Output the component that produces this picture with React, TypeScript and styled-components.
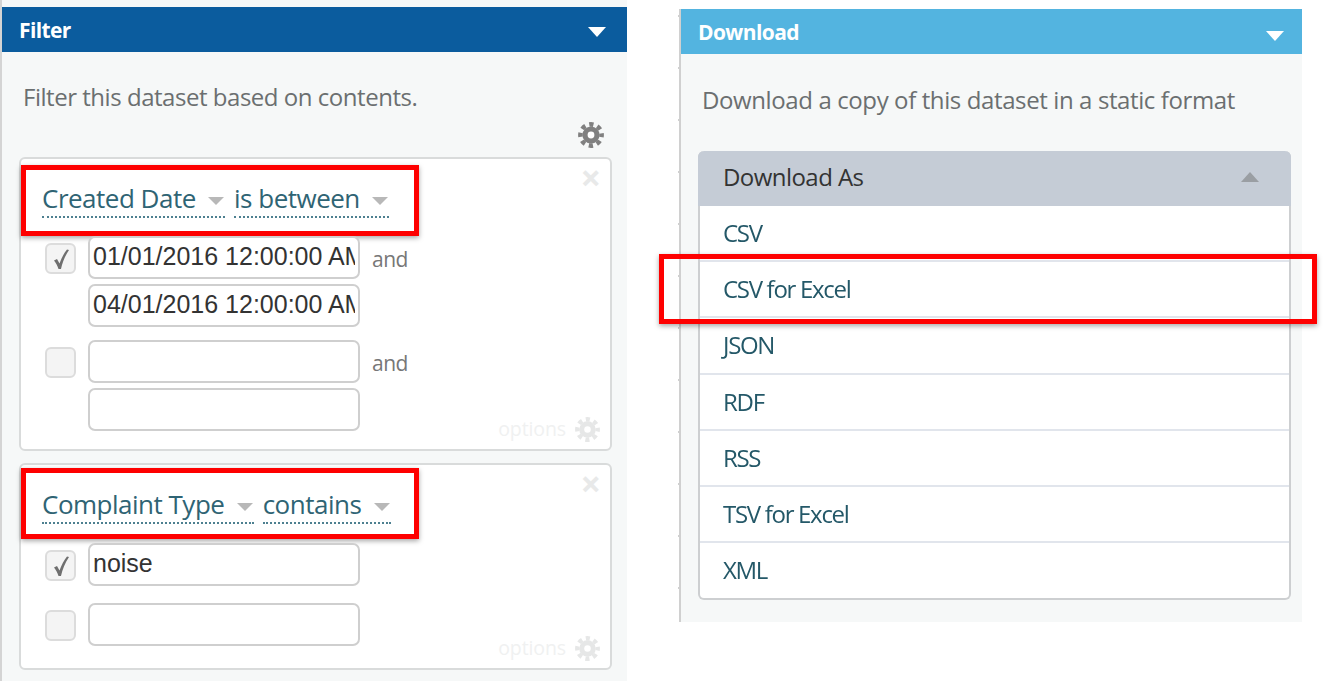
import React from "react";
import styled, { createGlobalStyle } from "styled-components";

const formats = ["CSV", "CSV for Excel", "JSON", "RDF", "RSS", "TSV for Excel", "XML"];

const Gear: React.FC = () => (
  <svg viewBox="0 0 26 26" width="1em" height="1em">
    <circle cx="13" cy="13" r="8.6" fill="currentColor" />
    <circle cx="13" cy="13" r="10.6" fill="none" stroke="currentColor" strokeWidth="4.6" strokeDasharray="4.3 4.03" strokeDashoffset="2.15" />
    <circle cx="13" cy="13" r="3.4" fill="#fff" />
  </svg>
);

const CheckMark: React.FC = () => (
  <svg width="20" height="22" viewBox="0 0 20 22">
    <path d="M3 12.5 L6 11 L8.5 15.5 C10.5 10 13 5 16 1.5 L18 2 C14 8 11.5 14 10 21 L7.5 21 C6.5 18 5 15 3 12.5 Z" fill="#6f6f6f" />
  </svg>
);

const App: React.FC = () => {
  return (
    <Page>
      <GlobalStyle />
      <FilterPanel>
        <PanelHeader color="#0b5c9e">
          <span>Filter</span>
          <HeaderCaret />
        </PanelHeader>
        <FilterBody>
          <Intro>Filter this dataset based on contents.</Intro>
          <TopGear>
            <Gear />
          </TopGear>
          <ConditionCard height={294}>
            <CloseMark>×</CloseMark>
            <Highlight top={6} inset={10}>
              <Picker>
                Created Date <PickerCaret />
              </Picker>
              <Picker>
                is between <PickerCaret />
              </Picker>
            </Highlight>
            <ConditionRow gap={13} offset={0}>
              <CheckBox>
                <CheckMark />
              </CheckBox>
              <InputStack>
                <TextInput readOnly value="01/01/2016 12:00:00 AM" />
                <TextInput readOnly value="04/01/2016 12:00:00 AM" />
              </InputStack>
              <AndLabel>and</AndLabel>
            </ConditionRow>
            <ConditionRow gap={13} offset={0}>
              <CheckBox />
              <InputStack>
                <TextInput readOnly value="" />
                <TextInput readOnly value="" />
              </InputStack>
              <AndLabel>and</AndLabel>
            </ConditionRow>
            <Options>
              options <Gear />
            </Options>
          </ConditionCard>
          <ConditionCard height={207}>
            <CloseMark>×</CloseMark>
            <Highlight top={3} inset={13}>
              <Picker>
                Complaint Type <PickerCaret />
              </Picker>
              <Picker>
                contains <PickerCaret />
              </Picker>
            </Highlight>
            <ConditionRow gap={17} offset={4}>
              <CheckBox>
                <CheckMark />
              </CheckBox>
              <InputStack>
                <TextInput readOnly value="noise" />
              </InputStack>
            </ConditionRow>
            <ConditionRow gap={17} offset={0}>
              <CheckBox />
              <InputStack>
                <TextInput readOnly value="" />
              </InputStack>
            </ConditionRow>
            <Options>
              options <Gear />
            </Options>
          </ConditionCard>
        </FilterBody>
      </FilterPanel>
      <DownloadColumn>
        <Ruler />
        <DownloadPanel>
          <DownloadHeader color="#53b4e0">
            <span>Download</span>
            <HeaderCaret />
          </DownloadHeader>
          <DownloadBody>
            <DownloadIntro>Download a copy of this dataset in a static format</DownloadIntro>
            <FormatList>
              <FormatHeader>
                Download As
                <FormatCaret />
              </FormatHeader>
              {formats.map((format) => (
                <FormatRow key={format}>
                  {format}
                  {format === "CSV for Excel" && <RowHighlight />}
                </FormatRow>
              ))}
            </FormatList>
          </DownloadBody>
        </DownloadPanel>
      </DownloadColumn>
    </Page>
  );
};

const GlobalStyle = createGlobalStyle`
  html, body {
    margin: 0;
    padding: 0;
    background: #fff;
  }
`;

const Page = styled.div`
  display: flex;
  align-items: flex-start;
  width: 1325px;
  height: 681px;
  overflow: hidden;
  font-family: "Open Sans", "Liberation Sans", sans-serif;
  filter: blur(0.4px);
`;

const FilterPanel = styled.div`
  box-sizing: border-box;
  width: 627px;
  height: 681px;
  padding-top: 7px;
  background: #f6f8f8;
  border-left: 2px solid #d4d4d4;
`;

const PanelHeader = styled.div<{ color: string }>`
  display: flex;
  align-items: center;
  justify-content: space-between;
  box-sizing: border-box;
  height: 45px;
  padding: 0 21px 0 17px;
  background: ${(p) => p.color};
  color: #fff;
  font-size: 21px;
  font-weight: 700;
  letter-spacing: -0.6px;
`;

const DownloadHeader = styled(PanelHeader)`
  padding-right: 18px;

  i {
    margin-top: 8px;
  }
`;

const HeaderCaret = styled.i`
  margin-top: 4px;
  border-top: 10px solid #fff;
  border-left: 9px solid transparent;
  border-right: 9px solid transparent;
`;

const FilterBody = styled.div`
  padding: 29px 15px 0 17px;
`;

const Intro = styled.div`
  height: 32px;
  padding-left: 4px;
  color: #6b6f70;
  font-size: 24px;
  line-height: 32px;
  letter-spacing: -0.47px;
  white-space: nowrap;
`;

const DownloadIntro = styled(Intro)`
  letter-spacing: -0.39px;
`;

const TopGear = styled.div`
  display: flex;
  justify-content: flex-end;
  box-sizing: border-box;
  height: 44px;
  padding: 9px 8px 0 0;
  color: #808080;
  font-size: 26px;
`;

const ConditionCard = styled.div<{ height: number }>`
  position: relative;
  box-sizing: border-box;
  height: ${(p) => p.height}px;
  margin-bottom: 12px;
  background: #fff;
  border: 2px solid #d9dbdb;
  border-radius: 6px;
`;

const CloseMark = styled.span`
  position: absolute;
  top: 1px;
  right: 9px;
  color: #e8e9e9;
  font-size: 36px;
  font-weight: 700;
  line-height: 36px;
`;

const Highlight = styled.div<{ top: number; inset: number }>`
  box-sizing: border-box;
  display: flex;
  gap: 9px;
  width: 398px;
  height: 71px;
  margin: ${(p) => p.top}px 0 0 0;
  padding: ${(p) => p.inset}px 0 0 16px;
  border: 5px solid #fe0000;
  box-shadow: 0 2px 5px rgba(0, 0, 0, 0.35);
`;

const Picker = styled.div`
  height: 36px;
  color: #2f6474;
  font-size: 26px;
  line-height: 36px;
  letter-spacing: -0.5px;
  white-space: nowrap;
  border-bottom: 2px dotted #4d8090;
`;

const PickerCaret = styled.i`
  display: inline-block;
  margin: 0 1px 3px 6px;
  border-top: 8px solid #b8b8b8;
  border-left: 8px solid transparent;
  border-right: 8px solid transparent;
`;

const ConditionRow = styled.div<{ gap: number; offset: number }>`
  display: flex;
  align-items: flex-start;
  margin-top: ${(p) => p.offset}px;
  margin-bottom: ${(p) => p.gap}px;
  padding-left: 24px;
`;

const CheckBox = styled.div`
  box-sizing: border-box;
  display: flex;
  align-items: center;
  justify-content: center;
  width: 31px;
  height: 31px;
  margin: 7px 12px 0 0;
  background: #f4f4f4;
  border: 2px solid #dcdcdc;
  border-radius: 6px;
`;

const InputStack = styled.div`
  display: flex;
  flex-direction: column;
  gap: 5px;
`;

const TextInput = styled.input`
  box-sizing: border-box;
  display: block;
  width: 272px;
  height: 43px;
  padding: 0 3px 3px;
  color: #333;
  background: #fff;
  border: 2px solid #cfcfcf;
  border-radius: 7px;
  font-family: "Liberation Sans", Arial, sans-serif;
  font-size: 25px;
  outline: none;
`;

const AndLabel = styled.span`
  margin: 6px 0 0 12px;
  color: #777;
  font-size: 21px;
  line-height: 34px;
  letter-spacing: -0.5px;
`;

const Options = styled.div`
  position: absolute;
  right: 10px;
  bottom: 7px;
  display: flex;
  align-items: center;
  gap: 9px;
  color: #f0f1f1;
  font-size: 19.5px;
  line-height: 26px;
  letter-spacing: -0.1px;

  svg {
    width: 25px;
    height: 25px;
    color: #e6e7e7;
  }
`;

const DownloadColumn = styled.div`
  display: flex;
  margin: 9px 0 0 51px;
  height: 613px;
`;

const Ruler = styled.div`
  width: 3px;
  height: 100%;
  background:
    linear-gradient(#d0d0d0, #d0d0d0) right top / 2px 100% no-repeat,
    repeating-linear-gradient(transparent 0 6px, #d0d0d0 6px 8px, transparent 8px 52px);
`;

const DownloadPanel = styled.div`
  width: 621px;
  background: #f6f8f8;
`;

const DownloadBody = styled.div`
  padding: 30px 11px 0 17px;
`;

const FormatList = styled.div`
  box-sizing: border-box;
  width: 593px;
  height: 449px;
  margin-top: 35px;
  background: #fff;
  border: 2px solid #cdcfd1;
  border-top: none;
  border-radius: 6px;
`;

const FormatHeader = styled.div`
  display: flex;
  align-items: center;
  justify-content: space-between;
  box-sizing: border-box;
  height: 55px;
  margin: 0 -2px;
  padding: 0 32px 4px 25px;
  background: #c5ccd6;
  border-radius: 6px 6px 0 0;
  color: #333;
  font-size: 24px;
  letter-spacing: -0.55px;
`;

const FormatCaret = styled.i`
  border-bottom: 10px solid #9a9ea3;
  border-left: 9px solid transparent;
  border-right: 9px solid transparent;
`;

const FormatRow = styled.div`
  position: relative;
  box-sizing: border-box;
  height: 56.2px;
  padding-left: 23px;
  color: #245868;
  font-size: 24px;
  line-height: 54px;
  letter-spacing: -1.3px;
  border-bottom: 2px solid #e1e5ec;

  &:last-child {
    border-bottom: none;
  }
`;

const RowHighlight = styled.span`
  position: absolute;
  top: -8px;
  left: -41px;
  width: 658px;
  height: 70px;
  box-sizing: border-box;
  border: 5px solid #fe0000;
  box-shadow: 0 2px 5px rgba(0, 0, 0, 0.35);
`;

export default App;
